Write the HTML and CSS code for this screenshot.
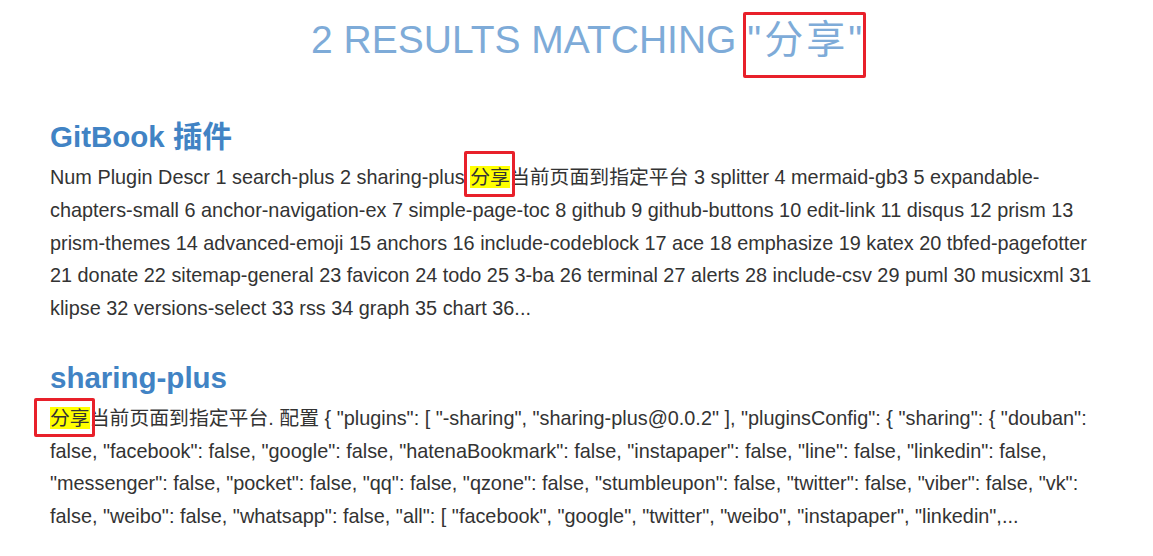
FILE: index.html
```html
<!DOCTYPE html>
<html lang="zh">
<head>
<meta charset="utf-8">
<title>Search results</title>
<link rel="stylesheet" href="styles.css">
</head>
<body>
<div class="page">
  <h1 class="title">2 RESULTS MATCHING <span class="boxed boxed-title">"分享"</span></h1>

  <section class="result">
    <h2 class="result-title">GitBook 插件</h2>
    <p class="result-text">Num Plugin Descr 1 search-plus 2 sharing-plus <span class="boxed boxed-first"><mark class="hl">分享</mark></span>当前页面到指定平台 3 splitter 4 mermaid-gb3 5 expandable-chapters-small 6 anchor-navigation-ex 7 simple-page-toc 8 github 9 github-buttons 10 edit-link 11 disqus 12 prism 13 prism-themes 14 advanced-emoji 15 anchors 16 include-codeblock 17 ace 18 emphasize 19 katex 20 tbfed-pagefotter 21 donate 22 sitemap-general 23 favicon 24 todo 25 3-ba 26 terminal 27 alerts 28 include-csv 29 puml 30 musicxml 31 klipse 32 versions-select 33 rss 34 graph 35 chart 36...</p>
  </section>

  <section class="result">
    <h2 class="result-title">sharing-plus</h2>
    <p class="result-text"><span class="boxed boxed-second"><mark class="hl">分享</mark></span>当前页面到指定平台. 配置 { "plugins": [ "-sharing", "sharing-plus@0.0.2" ], "pluginsConfig": { "sharing": { "douban": false, "facebook": false, "google": false, "hatenaBookmark": false, "instapaper": false, "line": false, "linkedin": false, "messenger": false, "pocket": false, "qq": false, "qzone": false, "stumbleupon": false, "twitter": false, "viber": false, "vk": false, "weibo": false, "whatsapp": false, "all": [ "facebook", "google", "twitter", "weibo", "instapaper", "linkedin",...</p>
  </section>
</div>
</body>
</html>
```

FILE: styles.css
```css
html, body {
  margin: 0;
  padding: 0;
  background: #ffffff;
}

body {
  font-family: "Liberation Sans", Arial, "Noto Sans CJK SC", sans-serif;
  color: #333333;
}

.page {
  padding: 0 55px 0 50px;
}

.title {
  margin: 0;
  padding: 14px 0 0 28px;
  text-align: center;
  font-size: 39px;
  font-weight: normal;
  line-height: 52px;
  color: #7eabd8;
}

.result {
  margin-top: 51px;
}

.result + .result {
  margin-top: 33px;
}

.result-title {
  margin: 0 0 4px;
  font-size: 29.5px;
  font-weight: bold;
  line-height: 40px;
  color: #4183c4;
}

.result-text {
  margin: 0;
  font-size: 19.85px;
  line-height: 32.75px;
}

.hl {
  background: #ffff00;
  color: #333333;
}

.boxed {
  position: relative;
}

.boxed-title {
  letter-spacing: 3px;
}

.boxed::after {
  content: "";
  position: absolute;
  top: 50%;
  box-sizing: border-box;
  border: 3px solid #e8202a;
  border-radius: 2px;
}

.boxed-title::after {
  left: -4px;
  right: -1px;
  margin-top: -28px;
  height: 66px;
}

.boxed-first::after {
  left: -6px;
  right: -5px;
  margin-top: -26px;
  height: 46px;
}

.boxed-second::after {
  left: -16px;
  right: -5px;
  margin-top: -20px;
  height: 39px;
}
```
